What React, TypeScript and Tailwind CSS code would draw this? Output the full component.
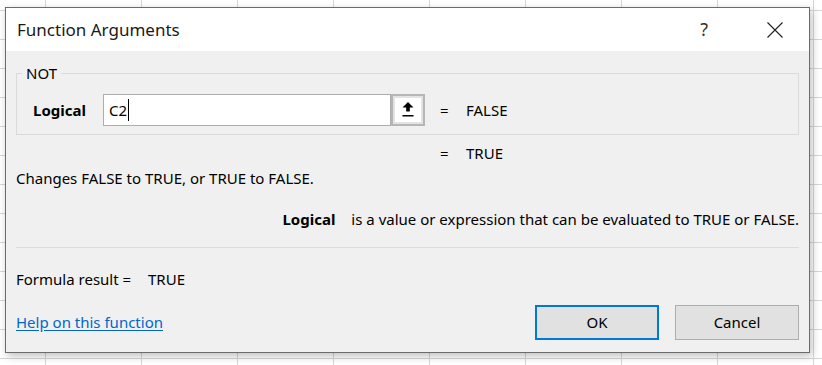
function PickerIcon() {
  return (
    <svg width="12" height="18" viewBox="0 0 12 18" fill="#000">
      <path d="M6 1 L11.5 6.5 L7.8 6.5 L7.8 10.5 L4.2 10.5 L4.2 6.5 L0.5 6.5 Z" />
      <rect x="0.5" y="14" width="11" height="1.5" />
    </svg>
  );
}

function CloseIcon() {
  return (
    <svg width="16" height="16" viewBox="0 0 16 16" stroke="#1f1f1f" strokeWidth="1.1">
      <path d="M0.5 0.5 L15.5 15.5 M15.5 0.5 L0.5 15.5" />
    </svg>
  );
}

export default function App() {
  return (
    <div className="w-[822px] h-[365px] overflow-hidden bg-white bg-[linear-gradient(to_right,#d6d6d6_1px,transparent_1px),linear-gradient(to_bottom,#d6d6d6_1px,transparent_1px)] bg-[size:96px_29px] bg-[position:45px_10px] pt-[7px] pl-[5px] font-['Noto_Sans','Liberation_Sans',sans-serif] text-black">
      <div className="w-[805px] h-[346px] border border-[#6b6b6b] shadow-[2px_3px_8px_rgba(0,0,0,0.25)] flex flex-col">
        {/* Title bar */}
        <div className="h-[43px] bg-white flex items-center justify-between pl-[11px] pr-[26px]">
          <span className="text-[17px] text-[#1a1a1a]">Function Arguments</span>
          <div className="flex items-center gap-[59px]">
            <span className="text-[18px] text-[#333]">?</span>
            <CloseIcon />
          </div>
        </div>

        {/* Body */}
        <div className="flex-1 bg-[#f0f0f0] px-[10px] text-[15px]">
          <fieldset className="mt-[12px] border border-[#dadada] pb-[8px]">
            <legend className="ml-[5px] px-[4px] leading-[20px]">NOT</legend>
            <div className="flex items-center mt-[11px]">
              <div className="w-[86px] pl-[16px] font-bold">Logical</div>
              <div className="w-[288px] h-[32px] border border-[#adadad] bg-white flex items-center pl-[5px]">
                C2
                <span className="ml-px w-px h-[22px] bg-black" />
              </div>
              <div className="w-[34px] h-[32px] border-[2px] border-[#b6b6b6] bg-[#e3e3e3] p-[2px]">
                <div className="w-full h-full bg-white flex items-center justify-center">
                  <PickerIcon />
                </div>
              </div>
              <span className="ml-[15px] w-[26px]">=</span>
              <span>FALSE</span>
            </div>
          </fieldset>

          <div className="flex pl-[424px] mt-[8px] leading-[20px]">
            <span className="w-[26px]">=</span>
            <span>TRUE</span>
          </div>

          <p className="mt-[5px] leading-[20px]">Changes FALSE to TRUE, or TRUE to FALSE.</p>

          <div className="flex justify-end mt-[21px] leading-[20px]">
            <span className="font-bold mr-[16px]">Logical</span>
            <span>is a value or expression that can be evaluated to TRUE or FALSE.</span>
          </div>

          <div className="border-t border-[#dcdcdc] mt-[18px]" />

          <div className="flex mt-[21px] leading-[20px]">
            <span className="w-[132px]">Formula result =</span>
            <span>TRUE</span>
          </div>

          <div className="flex items-center justify-between mt-[16px]">
            <a href="#" className="text-[#0066cc] underline underline-offset-2">
              Help on this function
            </a>
            <div className="flex gap-[16px]">
              <button className="w-[124px] h-[35px] bg-[#e1e1e1] border-2 border-[#0078d7]">OK</button>
              <button className="w-[124px] h-[35px] bg-[#e1e1e1] border border-[#adadad]">Cancel</button>
            </div>
          </div>
        </div>
      </div>
    </div>
  );
}
